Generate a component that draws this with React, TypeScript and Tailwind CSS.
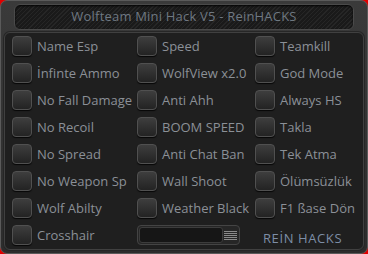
import React from "react";

const columns = [
  ["Name Esp", "İnfinte Ammo", "No Fall Damage", "No Recoil", "No Spread", "No Weapon Sp", "Wolf Abilty", "Crosshair"],
  ["Speed", "WolfView x2.0", "Anti Ahh", "BOOM SPEED", "Anti Chat Ban", "Wall Shoot", "Weather Black"],
  ["Teamkill", "God Mode", "Always HS", "Takla", "Tek Atma", "Ölümsüzlük", "F1 ßase Dön"],
];

function Box() {
  return (
    <div className="w-[20px] h-[20px] shrink-0 rounded-[4px] border border-[#505050] bg-gradient-to-b from-[#3e3e3e] to-[#232323] shadow-[0_1px_1px_rgba(0,0,0,0.8)]" />
  );
}

function Option({ label }: { label: string }) {
  return (
    <div className="flex items-center gap-[5px] h-[20px]">
      <Box />
      <span className="text-[13px] leading-none text-[#8b9097] whitespace-nowrap">{label}</span>
    </div>
  );
}

export default function App() {
  return (
    <div className="w-[368px] h-[254px] bg-[#e00000] font-['Open_Sans',sans-serif]">
      <div className="w-full h-full rounded-[7px] border border-[#5a5a5a] bg-gradient-to-b from-[#3a3a3a] to-[#2c2c2c] flex flex-col px-[3px] pb-[3px]">
        {/* title bar */}
        <div className="mx-[10px] mt-[3px] h-[26px] rounded-[6px] border border-[#4a4a4a] bg-[#1c1c1c] bg-[repeating-linear-gradient(135deg,#1a1a1a_0px,#1a1a1a_2px,#262626_2px,#262626_3px)] shadow-[inset_0_1px_2px_rgba(0,0,0,0.9)] flex items-center justify-center">
          <span className="text-[13px] text-[#6f7882] tracking-[0.2px]">Wolfteam Mini Hack V5 - ReinHACKS</span>
        </div>

        {/* main panel */}
        <div className="mt-[2px] flex-1 rounded-[6px] border border-[#404040] bg-[#1f1f1f] shadow-[0_0_0_1px_#262626] pl-[7px] pt-[3px]">
          <div className="grid grid-cols-[125px_118px_1fr]">
            {columns.map((col, i) => (
              <div key={i} className="flex flex-col gap-[7px]">
                {col.map((label) => (
                  <Option key={label} label={label} />
                ))}
                {i === 1 && (
                  <div className="flex items-center h-[20px] w-[103px] rounded-[4px] border border-[#444] bg-[#262626] px-[1px]">
                    <div className="h-[16px] flex-1 rounded-[3px] border border-[#3c3c3c] bg-[#161616]" />
                    <div className="w-[13px] mx-[1px] flex flex-col gap-[1px]">
                      {[0, 1, 2, 3, 4].map((n) => (
                        <div key={n} className="h-[1px] bg-[#8a8a8a]" />
                      ))}
                    </div>
                  </div>
                )}
                {i === 2 && (
                  <div className="h-[20px] flex items-end pl-[8px] text-[13px] leading-none text-[#7d8ea6] tracking-[0.6px]">REİN HACKS</div>
                )}
              </div>
            ))}
          </div>
        </div>
      </div>
    </div>
  );
}
